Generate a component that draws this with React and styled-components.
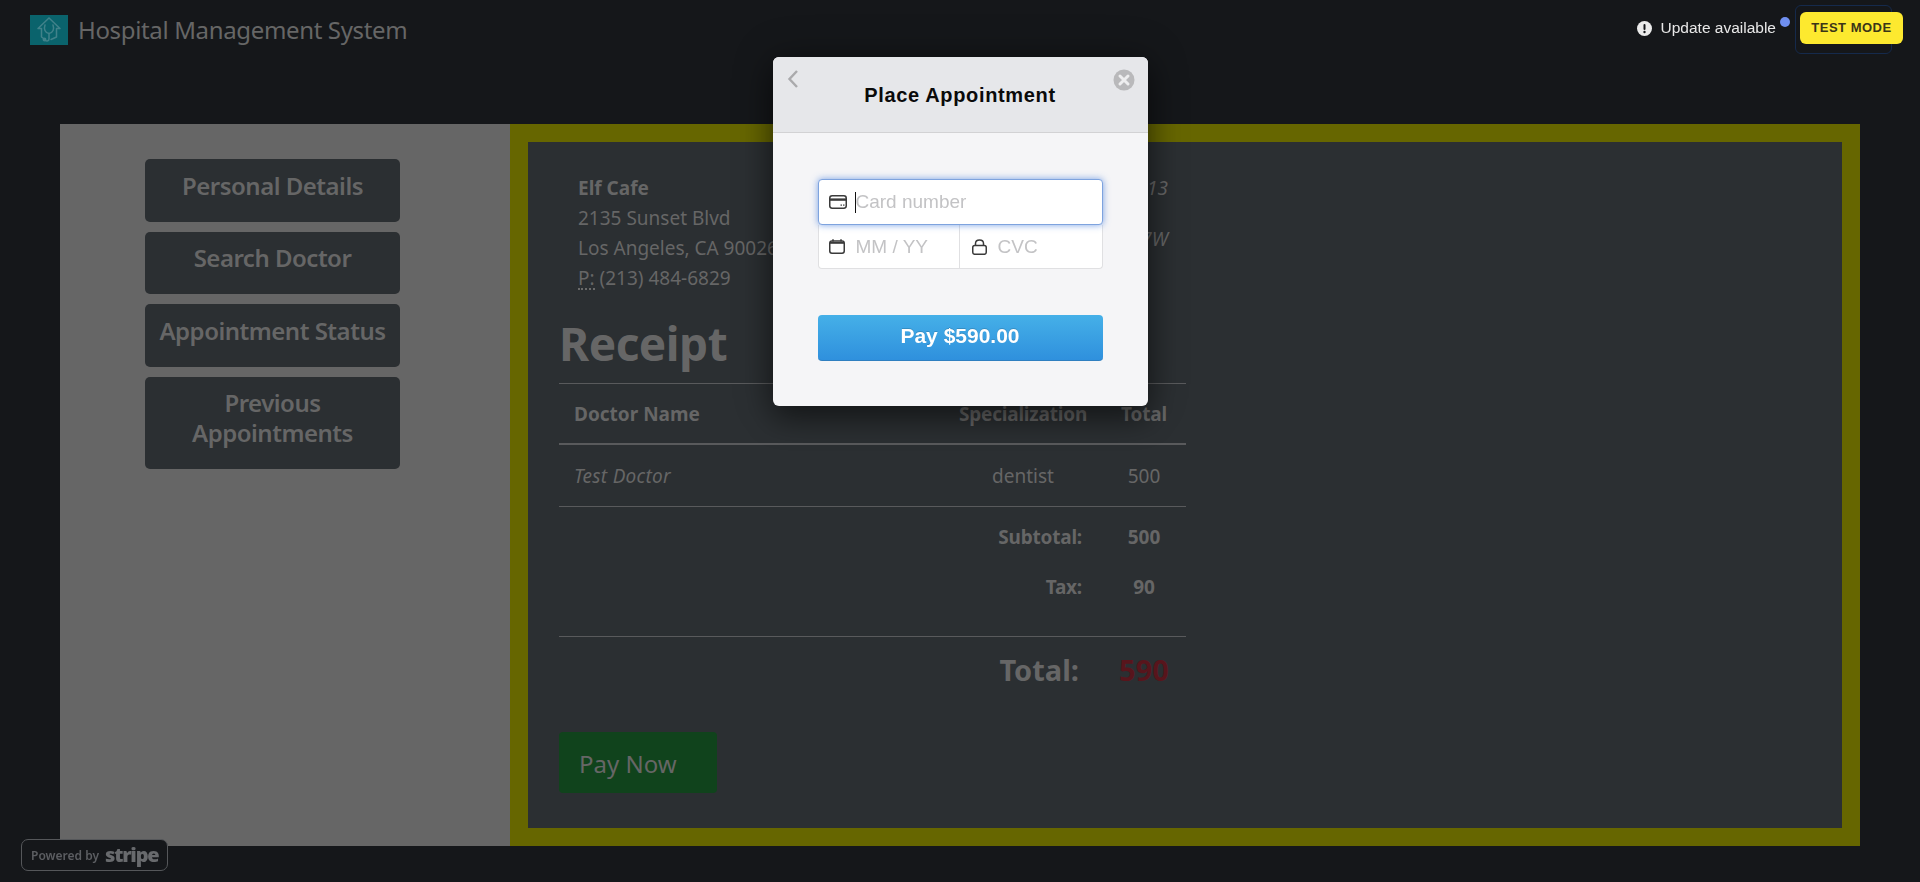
import React from 'react';
import styled, {createGlobalStyle} from 'styled-components';

const GlobalStyle = createGlobalStyle`
	html, body {
		margin: 0;
		height: 100%;
		overflow: hidden;
		background: #15171a;
	}
	* {
		box-sizing: border-box;
	}
`

function HouseLogo() {
	return (
		<LogoBox>
			<svg viewBox="0 0 38 30" width="38" height="30" fill="none" stroke="#41828a" strokeWidth="1.5" strokeLinejoin="round" strokeLinecap="round">
				<path d="M19 3 L8 13.5 L11.5 13.5 L11.5 22 L15 24.5 M19 3 L30 13.5 L26.5 13.5 L26.5 22 L21 24.5"/>
				<path d="M15 10 C13.5 14 15 18 19 18.5 C23 18 24.5 14 23 10"/>
				<path d="M19 18.5 L19 24 C19 26.5 15.5 26.5 15 24.5"/>
				<circle cx="14.5" cy="24.5" r="1.2"/>
			</svg>
		</LogoBox>
	)
}

export default function App() {
	return (
		<>
			<GlobalStyle/>
			<Page>
				<Header>
					<Brand>
						<HouseLogo/>
						<BrandName>Hospital Management System</BrandName>
					</Brand>
				</Header>
				<Main>
					<Sidebar>
						<MenuButton>Personal Details</MenuButton>
						<MenuButton>Search Doctor</MenuButton>
						<MenuButton>Appointment Status</MenuButton>
						<MenuButton>Previous Appointments</MenuButton>
					</Sidebar>
					<Content>
						<Inner>
							<InfoRow>
								<Address>
									<strong>Elf Cafe</strong>
									<span>2135 Sunset Blvd</span>
									<span>Los Angeles, CA 90026</span>
									<span><Abbr>P:</Abbr> (213) 484-6829</span>
								</Address>
								<Meta>
									<em>November 2013</em>
									<em>34522677W</em>
								</Meta>
							</InfoRow>
							<Heading>Receipt</Heading>
							<Table>
								<Row $height={61}>
									<HeadLeft>Doctor Name</HeadLeft>
									<HeadCell>Specialization</HeadCell>
									<HeadCell>Total</HeadCell>
								</Row>
								<Row $height={62} $thin>
									<DoctorCell>Test Doctor</DoctorCell>
									<Cell>dentist</Cell>
									<Cell>500</Cell>
								</Row>
								<SummaryBlock>
									<SummaryRow>
										<span/>
										<SummaryLabel>Subtotal:</SummaryLabel>
										<SummaryValue>500</SummaryValue>
									</SummaryRow>
									<SummaryRow>
										<span/>
										<SummaryLabel>Tax:</SummaryLabel>
										<SummaryValue>90</SummaryValue>
									</SummaryRow>
								</SummaryBlock>
								<TotalRow>
									<span/>
									<TotalLabel>Total:</TotalLabel>
									<TotalValue>590</TotalValue>
								</TotalRow>
							</Table>
							<PayNow>Pay Now</PayNow>
						</Inner>
					</Content>
				</Main>
			</Page>

			<StripeBadge>
				<span>Powered by</span>
				<StripeWord>stripe</StripeWord>
			</StripeBadge>

			<TopRight>
				<UpdateNotice>
					<svg width="15" height="15" viewBox="0 0 15 15">
						<circle cx="7.5" cy="7.5" r="7.5" fill="#ebebeb"/>
						<rect x="6.5" y="3" width="2" height="6" rx="1" fill="#15171a"/>
						<circle cx="7.5" cy="11" r="1.2" fill="#15171a"/>
					</svg>
					<span>Update available</span>
					<UpdateDot/>
				</UpdateNotice>
				<TestMode>TEST MODE</TestMode>
			</TopRight>

			<Overlay>
				<Modal>
					<ModalHeader>
						<BackIcon viewBox="0 0 12 20" width="12" height="20" fill="none" stroke="#aaaaac" strokeWidth="2.4">
							<path d="M10 2 L2.5 10 L10 18"/>
						</BackIcon>
						<ModalTitle>Place Appointment</ModalTitle>
						<CloseIcon viewBox="0 0 22 22" width="22" height="22">
							<circle cx="11" cy="11" r="10.5" fill="#b9b9bb"/>
							<path d="M7 7 L15 15 M15 7 L7 15" stroke="#eeeeef" strokeWidth="3" strokeLinecap="round"/>
						</CloseIcon>
					</ModalHeader>
					<ModalBody>
						<CardFields>
							<CardNumber>
								<svg width="18" height="14" viewBox="0 0 18 14" fill="none">
									<rect x="0.75" y="0.75" width="16.5" height="12.5" rx="2.4" stroke="#3a3a3a" strokeWidth="1.5"/>
									<rect x="1" y="3.4" width="16" height="2.4" fill="#3a3a3a"/>
									<rect x="11.5" y="9.5" width="1.5" height="1.2" fill="#3a3a3a"/>
									<rect x="14" y="9.5" width="1.5" height="1.2" fill="#3a3a3a"/>
								</svg>
								<InputText>
									<Caret/>
									<Placeholder>Card number</Placeholder>
								</InputText>
							</CardNumber>
							<SplitRow>
								<SplitCell>
									<svg width="16" height="15" viewBox="0 0 16 15" fill="none">
										<rect x="0.75" y="2" width="14.5" height="12.2" rx="2.2" stroke="#3a3a3a" strokeWidth="1.5"/>
										<rect x="1" y="3" width="14" height="1.8" fill="#3a3a3a"/>
										<path d="M4 0.2 V2.5 M12 0.2 V2.5" stroke="#3a3a3a" strokeWidth="1.5"/>
									</svg>
									<Placeholder>MM / YY</Placeholder>
								</SplitCell>
								<SplitCell $last>
									<svg width="15" height="16" viewBox="0 0 15 16" fill="none">
										<rect x="0.75" y="6.5" width="13.5" height="8.8" rx="2" stroke="#3a3a3a" strokeWidth="1.5"/>
										<path d="M3.5 6.5 V4.6 C3.5 -0.2 11.5 -0.2 11.5 4.6 V6.5" stroke="#3a3a3a" strokeWidth="1.5"/>
									</svg>
									<Placeholder>CVC</Placeholder>
								</SplitCell>
							</SplitRow>
						</CardFields>
						<PayButton>Pay $590.00</PayButton>
					</ModalBody>
				</Modal>
			</Overlay>
		</>
	)
}

const bodyFont = `"Noto Sans", "Open Sans", sans-serif`;
const checkoutFont = `"Liberation Sans", Arial, sans-serif`;

const Page = styled.div`
	height: 882px;
	display: flex;
	flex-direction: column;
	font-family: ${bodyFont};
	color: #666;
`

const Header = styled.header`
	height: 124px;
	padding: 15px 30px 0;
`

const Brand = styled.div`
	display: flex;
	align-items: center;
	gap: 10px;
`

const LogoBox = styled.div`
	width: 38px;
	height: 30px;
	background: #0a636c;
	display: flex;
`

const BrandName = styled.div`
	font-size: 24px;
	line-height: 30px;
	letter-spacing: -0.35px;
	color: #666;
`

const Main = styled.main`
	display: flex;
	height: 722px;
	margin: 0 60px;
`

const Sidebar = styled.aside`
	width: 450px;
	background: #666;
	padding: 35px 110px 0 85px;
	display: flex;
	flex-direction: column;
	gap: 10px;
	align-items: stretch;
`

const MenuButton = styled.div`
	background: #2b2f32;
	border-radius: 5px;
	padding: 11.5px 8px 21px;
	text-align: center;
	font-size: 24px;
	line-height: 30px;
	font-weight: 600;
	letter-spacing: -0.5px;
	color: #666;
`

const Content = styled.section`
	flex: 1;
	border: 18px solid #666600;
	background: #2b2f32;
`

const Inner = styled.div`
	width: 658px;
	padding: 31px 0 0 31px;
	height: 100%;
`

const InfoRow = styled.div`
	display: flex;
	justify-content: space-between;
	padding: 0 18px 0 19px;
`

const Address = styled.div`
	display: flex;
	flex-direction: column;
	font-size: 19px;
	line-height: 30px;
	strong {
		font-weight: 700;
	}
`

const Abbr = styled.span`
	display: inline-block;
	line-height: 20px;
	border-bottom: 2px dotted #6a6a6a;
`

const Meta = styled.div`
	display: flex;
	flex-direction: column;
	align-items: flex-end;
	gap: 21px;
	font-size: 19px;
	line-height: 30px;
`

const Heading = styled.h1`
	margin: 10px 0 0;
	font-size: 46px;
	line-height: 80px;
	font-weight: 700;
	letter-spacing: -0.5px;
	color: #666;
`

const Table = styled.div`
	width: 627px;
	border-top: 1px solid #595a5c;
`

const Row = styled.div`
	display: grid;
	grid-template-columns: 1fr 158px 84px;
	align-items: center;
	height: ${props => props.$height}px;
	border-bottom: ${props => (props.$thin ? '1px' : '2px')} solid #595a5c;
`

const HeadCell = styled.div`
	font-size: 19px;
	font-weight: 700;
	text-align: center;
	letter-spacing: -0.2px;
`

const HeadLeft = styled(HeadCell)`
	text-align: left;
	padding-left: 15px;
	letter-spacing: 0;
`

const Cell = styled.div`
	font-size: 19px;
	text-align: center;
`

const DoctorCell = styled(Cell)`
	text-align: left;
	padding-left: 15px;
	font-style: italic;
	letter-spacing: 0.3px;
`

const SummaryBlock = styled.div`
	height: 130px;
	padding-top: 5px;
	border-bottom: 1px solid #595a5c;
`

const SummaryRow = styled.div`
	display: grid;
	grid-template-columns: 1fr 158px 84px;
	align-items: center;
	height: 50px;
`

const SummaryLabel = styled.div`
	font-size: 19px;
	font-weight: 700;
	text-align: right;
	padding-right: 20px;
	letter-spacing: -0.2px;
`

const SummaryValue = styled.div`
	font-size: 19px;
	font-weight: 700;
	text-align: center;
`

const TotalRow = styled.div`
	display: grid;
	grid-template-columns: 1fr 158px 84px;
	align-items: center;
	height: 70px;
	padding-bottom: 5px;
`

const TotalLabel = styled.div`
	font-size: 29px;
	font-weight: 700;
	text-align: right;
	padding-right: 23px;
`

const TotalValue = styled.div`
	font-size: 29px;
	font-weight: 700;
	text-align: center;
	color: #58151c;
`

const PayNow = styled.div`
	width: 158px;
	height: 61px;
	margin-top: 25px;
	padding: 1px 0 0 20px;
	background: #10431c;
	border-radius: 4px;
	font-size: 24px;
	line-height: 61px;
	color: #666;
`

const StripeBadge = styled.div`
	position: fixed;
	left: 21px;
	top: 839px;
	width: 147px;
	height: 32px;
	border: 1.5px solid #55575a;
	border-radius: 7px;
	background: #15171a;
	display: flex;
	align-items: center;
	gap: 6px;
	padding-left: 9px;
	white-space: nowrap;
	font-family: ${bodyFont};
	font-size: 12px;
	font-weight: 600;
	color: #5c5e62;
`

const StripeWord = styled.span`
	font-family: "Open Sans", sans-serif;
	font-size: 20px;
	font-weight: 800;
	letter-spacing: -1.2px;
	line-height: 26px;
	color: #686a6d;
`

const TopRight = styled.div`
	position: fixed;
	top: 12px;
	right: 17px;
	display: flex;
	align-items: center;
	gap: 24px;
	z-index: 3;
`

const UpdateNotice = styled.div`
	position: relative;
	display: flex;
	align-items: center;
	gap: 9px;
	font-family: "Liberation Sans", Arial, sans-serif;
	font-size: 15.5px;
	color: #e8e8e8;
	svg {
		flex-shrink: 0;
	}
`

const UpdateDot = styled.span`
	position: absolute;
	right: -14px;
	top: -2px;
	width: 10px;
	height: 10px;
	border-radius: 50%;
	background: #6f8ff0;
`

const TestMode = styled.div`
	position: relative;
	width: 103px;
	height: 32px;
	border-radius: 6px;
	background: #fde92f;
	font-family: "Liberation Sans", Arial, sans-serif;
	font-size: 13px;
	letter-spacing: 0.5px;
	line-height: 32px;
	font-weight: 700;
	text-align: center;
	color: #3a3518;
	&::before {
		content: '';
		position: absolute;
		left: -5px;
		top: -7px;
		width: 95px;
		height: 47px;
		border: 1px solid #152a4c;
		border-radius: 6px;
		z-index: -1;
	}
`

const Overlay = styled.div`
	position: fixed;
	inset: 0;
	display: flex;
	justify-content: center;
	align-items: flex-start;
	padding-top: 57px;
	z-index: 2;
`

const Modal = styled.div`
	width: 375px;
	height: 349px;
	border-radius: 6px;
	background: #f5f5f7;
	box-shadow: 0 12px 30px rgba(0, 0, 0, 0.45), 0 0 40px rgba(0, 0, 0, 0.25);
	font-family: ${checkoutFont};
	display: flex;
	flex-direction: column;
`

const ModalHeader = styled.div`
	position: relative;
	height: 76px;
	flex-shrink: 0;
	background: #e6e7ea;
	border-bottom: 1px solid #d2d2d4;
	border-radius: 6px 6px 0 0;
	display: flex;
	align-items: center;
	justify-content: center;
	padding-top: 1px;
`

const ModalTitle = styled.h2`
	margin: 0;
	font-size: 20px;
	font-weight: 700;
	letter-spacing: 0.65px;
	color: #0a0a0a;
`

const BackIcon = styled.svg`
	position: absolute;
	left: 14px;
	top: 12px;
`

const CloseIcon = styled.svg`
	position: absolute;
	right: 13px;
	top: 12px;
`

const ModalBody = styled.div`
	padding: 46px 45px 0;
	display: flex;
	flex-direction: column;
	gap: 46px;
`

const CardFields = styled.div`
	display: flex;
	flex-direction: column;
`

const CardNumber = styled.div`
	height: 46px;
	background: #fff;
	border-radius: 4px;
	border: 1px solid #7ea3de;
	box-shadow: 0 0 7px rgba(90, 140, 225, 0.8);
	display: flex;
	align-items: center;
	gap: 8px;
	padding-left: 10px;
	position: relative;
	z-index: 1;
`

const InputText = styled.div`
	display: flex;
	align-items: center;
`

const Caret = styled.span`
	width: 1px;
	height: 21px;
	background: #111;
`

const Placeholder = styled.span`
	font-size: 19px;
	color: #c3c3c5;
`

const SplitRow = styled.div`
	display: grid;
	grid-template-columns: 141px 1fr;
	height: 44px;
	background: #fff;
	border: 1px solid #e0e0e2;
	border-top: 0;
	border-radius: 0 0 4px 4px;
`

const SplitCell = styled.div`
	display: flex;
	align-items: center;
	gap: 11px;
	padding-left: ${props => (props.$last ? '12px' : '10px')};
	border-right: ${props => (props.$last ? '0' : '1px solid #e0e0e2')};
`

const PayButton = styled.button`
	height: 46px;
	border: 0;
	border-bottom: 1px solid #2f7fc0;
	border-radius: 4px;
	padding-bottom: 5px;
	background: linear-gradient(#45b0e8, #2f90dd);
	font-family: ${checkoutFont};
	font-size: 21px;
	font-weight: 700;
	color: #fff;
	text-shadow: 0 -1px 0 rgba(0, 0, 0, 0.15);
`
